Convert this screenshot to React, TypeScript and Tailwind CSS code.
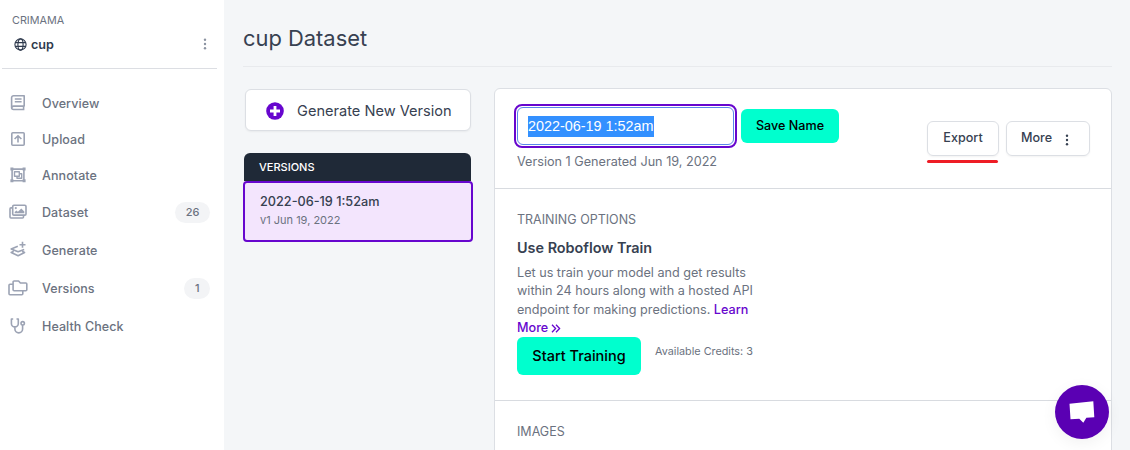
import type { ReactNode } from "react";

const Icon = ({ children, w = 18, h = 18 }: { children: ReactNode; w?: number; h?: number }) => (
  <svg width={w} height={h} viewBox={`0 0 ${w} ${h}`} fill="none" stroke="currentColor" strokeWidth={1.6} strokeLinejoin="round" className="shrink-0">
    {children}
  </svg>
);

const OverviewIcon = () => (
  <Icon>
    <path d="M15.2 1.7H4.6a2 2 0 0 0-2 2v9.8a2 2 0 0 0 2 2h10.8M15.2 1.2v10.9H4.6a1.9 1.9 0 0 0-1.7 1.5M14.6 12.1v3.4M5.8 5h6.8M5.8 7.7h6.8" />
  </Icon>
);
const UploadIcon = () => (
  <Icon>
    <rect x="2.8" y="2.8" width="12.4" height="12.4" rx="1" />
    <path d="M9 12.6V6M5.6 9 9 5.7 12.4 9" strokeWidth={1.6} />
  </Icon>
);
const AnnotateIcon = () => (
  <Icon>
    <rect x="3.1" y="3.1" width="11.8" height="11.6" />
    <path d="M1.4 1.5h3v3h-3zM13.6 1.5h3v3h-3zM1.4 13.2h3v3h-3zM13.6 13.2h3v3h-3z" fill="currentColor" stroke="none" />
    <path d="M5.5 5.7h4.8v4.6H5.5zM10.5 7.8h2.2v4.4H8V10.5" strokeWidth={1.4} />
  </Icon>
);
const DatasetIcon = () => (
  <Icon>
    <rect x="3.7" y="2.3" width="13.3" height="9.8" rx="1.2" />
    <path d="M3.4 4.9H2a1 1 0 0 0-1 1v8.1a1 1 0 0 0 1 1h11.5a1 1 0 0 0 1-1v-1.5" />
    <path d="M5.7 10.2V8.9l1.7-1.5 1.5 1.3 3.4-3.2 3 3v1.7z" fill="currentColor" stroke="none" />
    <circle cx="6.8" cy="5.1" r="1.1" fill="currentColor" stroke="none" />
  </Icon>
);
const GenerateIcon = () => (
  <Icon>
    <path d="M13.5.8v6M10.5 3.8h6" />
    <path d="M8.8 5.2 2.2 8l6.9 2.8L15.2 8.4M4.7 10.3l-2.5 1.2 6.9 3.3 6.5-3.3-2.4-1.2" />
  </Icon>
);
const VersionsIcon = () => (
  <Icon w={20}>
    <path d="M5.1 3v7.8a1 1 0 0 0 1 1h11.7a1 1 0 0 0 1-1V5a1 1 0 0 0-1-1h-5.4l-1.8-2H6.1a1 1 0 0 0-1 1Z" />
    <path d="M5 5.2H2a1 1 0 0 0-1 1v8.6a1 1 0 0 0 1 1h11.8a1 1 0 0 0 1-1V12" />
  </Icon>
);
const HealthIcon = () => (
  <Icon>
    <path d="M4.2 2H2.4v4.4a3.4 3.4 0 0 0 6.9 0V2H7.5M5.9 10v2a3.85 3.85 0 0 0 7.7 0V8" />
    <circle cx="13.7" cy="6.3" r="1.7" />
  </Icon>
);

const nav: { label: string; icon: ReactNode; count?: number; tall?: boolean }[] = [
  { label: "Overview", icon: <OverviewIcon /> },
  { label: "Upload", icon: <UploadIcon /> },
  { label: "Annotate", icon: <AnnotateIcon /> },
  { label: "Dataset", icon: <DatasetIcon />, count: 26, tall: true },
  { label: "Generate", icon: <GenerateIcon />, tall: true },
  { label: "Versions", icon: <VersionsIcon />, count: 1, tall: true },
  { label: "Health Check", icon: <HealthIcon />, tall: true },
];

const Dots = () => (
  <svg width="4" height="12" viewBox="0 0 4 12" fill="currentColor">
    <circle cx="2" cy="1.7" r="1.2" />
    <circle cx="2" cy="6" r="1.2" />
    <circle cx="2" cy="10.3" r="1.2" />
  </svg>
);

function Sidebar() {
  return (
    <aside className="w-[224px] shrink-0 bg-white text-[#6b7280]">
      <header className="ml-0.5 mr-[7px] h-[69px] border-b border-[#dcdee3] pl-2.5 pt-[13px]">
        <div className="text-[10.8px] leading-4">CRIMAMA</div>
        <div className="flex h-[30px] items-center pl-0.5 text-[#2f3a4d]">
          <svg width="13" height="13" viewBox="0 0 13 13" fill="none" stroke="currentColor" strokeWidth="1.1">
            <circle cx="6.5" cy="6.5" r="5.6" />
            <ellipse cx="6.5" cy="6.5" rx="2.6" ry="5.6" />
            <path d="M1.2 4.6h10.6M1.2 8.4h10.6" />
          </svg>
          <span className="ml-1 pt-0.5 text-[12.6px] font-semibold">cup</span>
          <span className="ml-auto mr-2.5 text-[#8b93a1]"><Dots /></span>
        </div>
      </header>
      <nav className="pt-4">
        {nav.map((n) => (
          <a key={n.label} className={`flex items-center pr-3.5 ${n.tall ? "h-[38px]" : "h-9"}`}>
            <span className="flex w-9 justify-center text-[#9ca3b4]">{n.icon}</span>
            <span className="ml-1.5 pt-0.5 text-[12.5px] font-medium tracking-[0.08px]">{n.label}</span>
            {n.count !== undefined && (
              <span className="ml-auto flex h-[21px] items-center rounded-full bg-[#f3f4f6] px-[10.5px] text-[11px] font-medium">{n.count}</span>
            )}
          </a>
        ))}
      </nav>
    </aside>
  );
}

function Versions() {
  return (
    <section className="w-[230px] shrink-0">
      <button className="ml-0.5 flex h-[42px] w-[226px] items-center rounded-md border border-[#dcdfe4] bg-white pl-5 text-[14.6px] text-[#374151] shadow-xs">
        <svg className="mt-0.5" width="18" height="18" viewBox="0 0 18 18">
          <circle cx="9" cy="9" r="8.8" fill="#6706ce" />
          <path d="M9 4v10M4 9h10" stroke="white" strokeWidth="2.8" />
        </svg>
        <span className="ml-[13px] whitespace-nowrap pt-1">Generate New Version</span>
      </button>
      <h2 className="ml-px mt-[22px] h-7 w-[227px] rounded-t-md bg-[#1f2937] pl-[15px] text-[11px] font-medium leading-[29px] text-white">VERSIONS</h2>
      <div className="h-[61px] rounded border-2 border-[#6706ce] bg-[#f3e5fd] pl-[15px] pt-[9px]">
        <div className="text-[12.7px] font-medium leading-5 text-[#374151]">2022-06-19 1:52am</div>
        <div className="text-[11px] leading-4 text-[#6b7280]">v1 Jun 19, 2022</div>
      </div>
    </section>
  );
}

function Panel() {
  return (
    <section className="-mt-px ml-[21px] h-[380px] flex-1 rounded-t-md border border-[#dcdfe4] bg-white text-[#6b7280]">
      <div className="flex h-[100px] border-b border-[#d8dbe0] pl-[19px] pr-[21px] pt-[15px]">
        <div>
          <div className="flex items-center">
            <div className="h-11 w-[223px] rounded-lg border-2 border-[#6706ce] p-px">
              <div className="flex h-full items-center rounded-md border border-[#5a86ea] pl-2.5">
                <span className="h-[21px] bg-[#3390ff] font-['Liberation_Sans',sans-serif] text-[14.4px] leading-[21px] text-white">2022-06-19 1:52am</span>
              </div>
            </div>
            <button className="ml-1 h-[34px] w-[98px] rounded-md bg-[#00ffce] pt-px text-[12.6px] font-medium text-black">Save Name</button>
          </div>
          <p className="ml-[3px] mt-[3px] text-[12.65px] leading-[21px]">Version 1 Generated Jun 19, 2022</p>
        </div>
        <div className="ml-auto flex gap-[7px] pt-[17px] text-[12.6px] font-medium text-[#374151]">
          <div>
            <button className="h-[35px] w-[72px] rounded-md border border-[#dcdfe4] shadow-xs">Export</button>
            <div className="mt-[4px] h-[3px] w-[71px] rounded-full bg-[#ee1c25]" />
          </div>
          <button className="flex h-[35px] w-[84px] items-center rounded-md border border-[#dcdfe4] pl-3.5 shadow-xs">
            More<span className="ml-[13px] mt-[3px]"><Dots /></span>
          </button>
        </div>
      </div>
      <div className="h-[212px] border-b border-[#d8dbe0] pl-[22px] pt-[21px]">
        <h3 className="text-[12.5px] leading-5">TRAINING OPTIONS</h3>
        <h4 className="mt-2 text-[14.4px] font-semibold leading-5 text-[#374151]">Use Roboflow Train</h4>
        <p className="mt-1.5 whitespace-nowrap text-[12.63px] leading-[18.3px]">
          Let us train your model and get results<br />
          within 24 hours along with a hosted API<br />
          endpoint for making predictions. <a className="font-medium text-[#6706ce]">Learn</a><br />
          <a className="font-medium text-[#6706ce]">More
            <svg className="ml-[3px] inline" width="10" height="9" viewBox="0 0 10 9" fill="none" stroke="currentColor" strokeWidth="1.3"><path d="m1 .8 3.6 3.7L1 8.2M5 .8l3.6 3.7L5 8.2" /></svg>
          </a>
        </p>
        <div className="flex items-start">
          <button className="h-[38px] w-[124px] rounded-md bg-[#00ffce] pb-px text-[14.5px] font-medium text-black">Start Training</button>
          <span className="ml-3.5 mt-[7px] text-[10.8px] leading-4">Available Credits: 3</span>
        </div>
      </div>
      <h3 className="pl-[22px] pt-[21px] text-[12.5px] leading-5">IMAGES</h3>
    </section>
  );
}

export default function App() {
  return (
    <div className="relative flex h-[450px] w-[1130px] overflow-hidden bg-[#f4f6f8] font-['Inter',sans-serif]">
      <Sidebar />
      <main className="min-w-0 flex-1 pl-[19px] pr-[18px]">
        <h1 className="h-[67px] border-b border-[#e8eaed] pt-[22px] text-[21.9px] leading-8 text-[#374151]">cup Dataset</h1>
        <div className="flex pt-[22px]">
          <Versions />
          <Panel />
        </div>
      </main>
      <button className="absolute left-[1055px] top-[385px] flex size-[54px] items-center justify-center rounded-full bg-[#5a00b3] pt-0.5 shadow-[0_4px_16px_rgba(0,0,0,0.06)]">
        <svg className="-ml-px" width="26" height="24" viewBox="0 0 26 24" fill="white">
          <path d="M.5 2.8 24.3.2l1 16-7.9.6-3.1 4.9-4-4-8.8.6z" />
        </svg>
      </button>
    </div>
  );
}
